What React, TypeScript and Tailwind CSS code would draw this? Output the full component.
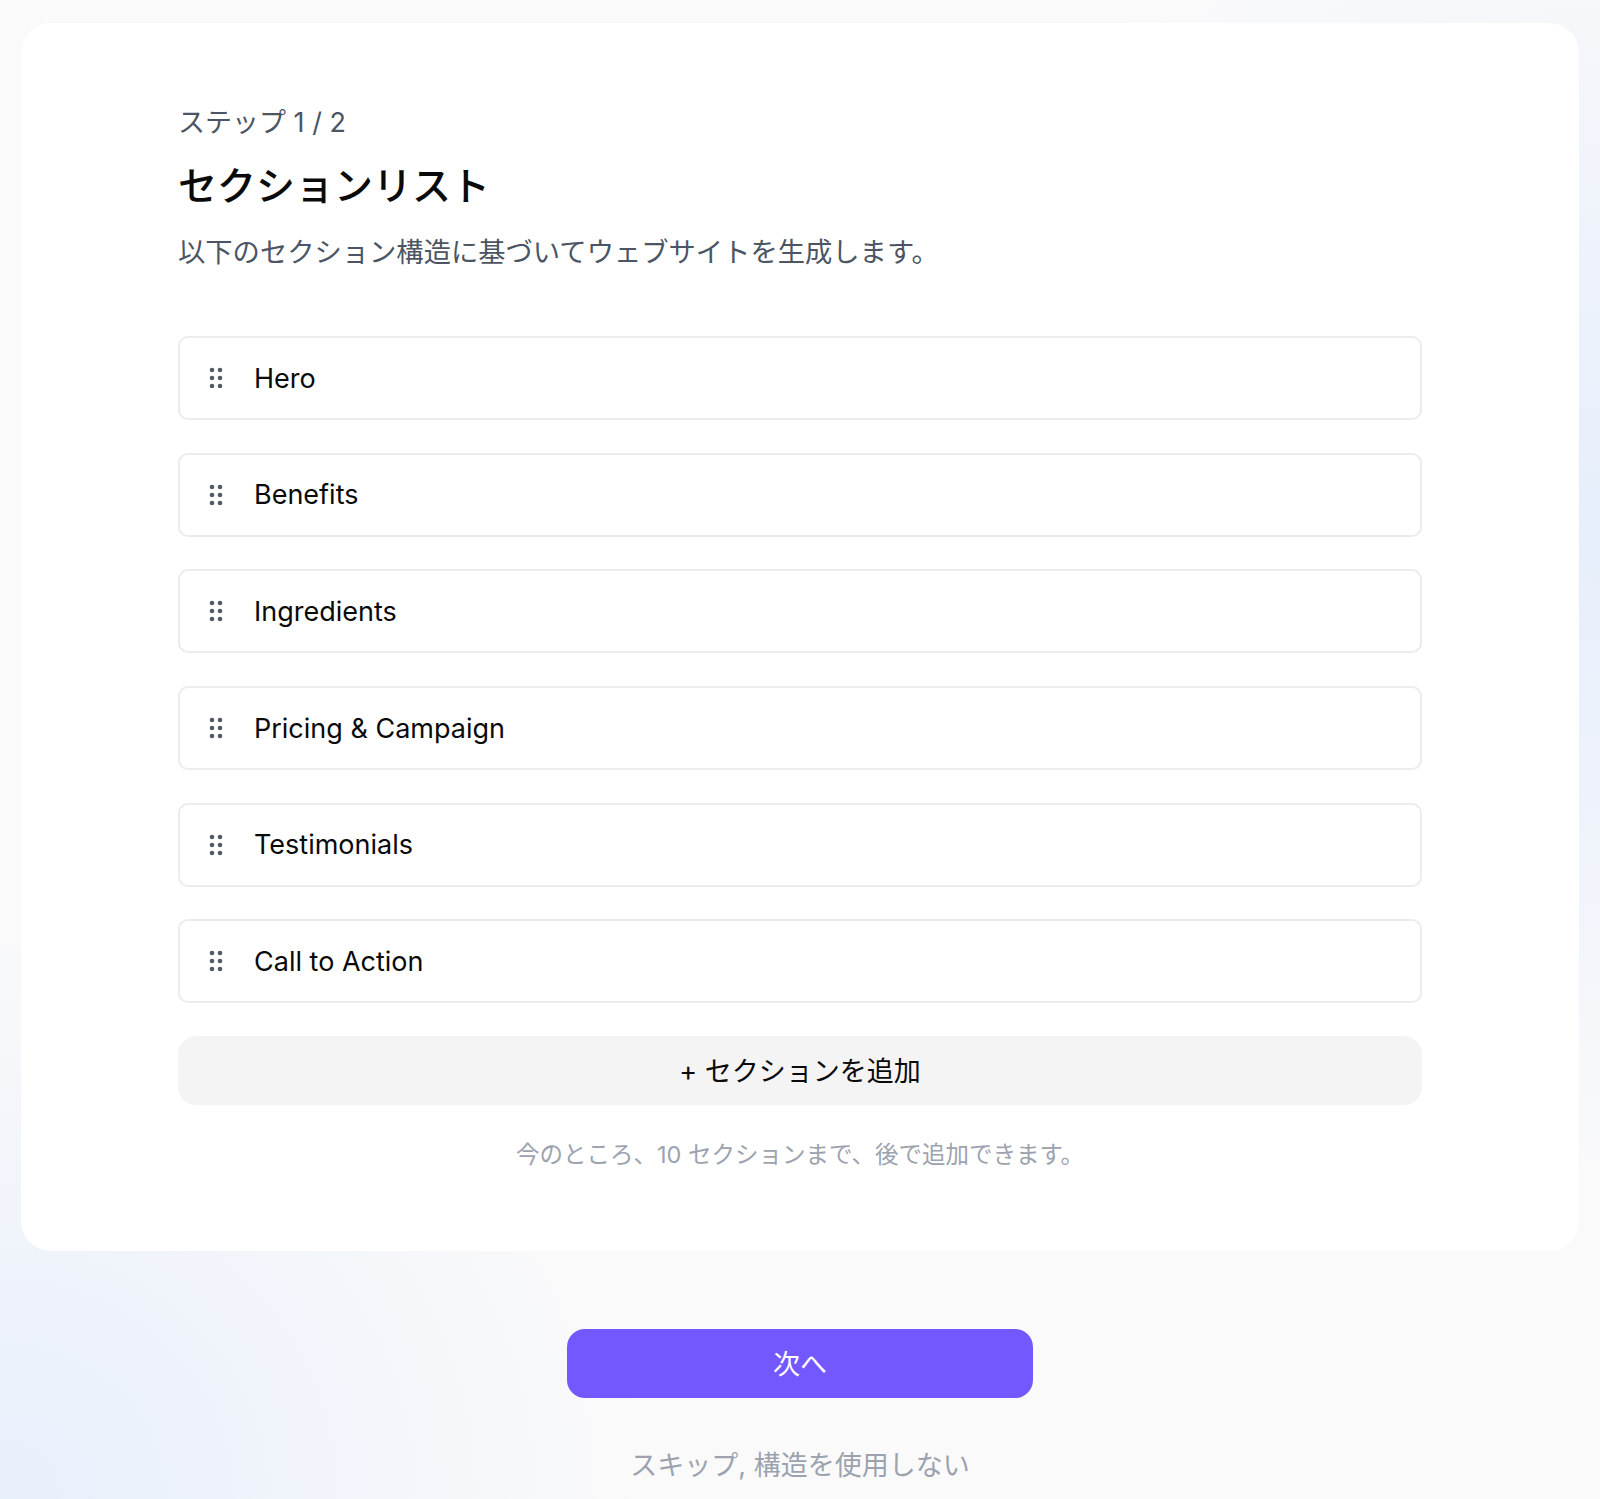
import React from 'react';

const sections = ['Hero', 'Benefits', 'Ingredients', 'Pricing & Campaign', 'Testimonials', 'Call to Action'];

const font = "font-['Inter','Noto_Sans_CJK_JP',sans-serif]";

function GripIcon() {
  return (
    <svg width="14" height="22" viewBox="0 0 14 22" className="text-[#525a68]" fill="currentColor">
      <circle cx="3" cy="3" r="2.3" />
      <circle cx="11" cy="3" r="2.3" />
      <circle cx="3" cy="11" r="2.3" />
      <circle cx="11" cy="11" r="2.3" />
      <circle cx="3" cy="19" r="2.3" />
      <circle cx="11" cy="19" r="2.3" />
    </svg>
  );
}

function SectionRow({ name }: { name: string }) {
  return (
    <div className="flex h-[84px] items-center rounded-[10px] border-2 border-[#ebecef] bg-white pl-[29px]">
      <GripIcon />
      <span className="ml-[31px] text-[27px] leading-none text-[#0a0a0a]">{name}</span>
    </div>
  );
}

export default function App() {
  return (
    <div
      className={`${font} min-h-[1499px] w-full px-[21px] pt-[23px] bg-[radial-gradient(ellipse_45%_45%_at_100%_35%,rgba(219,232,252,0.65),transparent),radial-gradient(ellipse_40%_40%_at_0%_100%,rgba(219,232,252,0.6),transparent),linear-gradient(#fafafa,#fafafa)]`}
    >
      <div className="rounded-[30px] bg-white px-[157px] pb-[80px] pt-[82px]">
        <p className="text-[27px] leading-[36px] text-[#4b5563]">ステップ 1 / 2</p>
        <h1 className="mt-[21px] text-[39px] font-medium leading-[48px] text-[#0a0a0a]">セクションリスト</h1>
        <p className="mt-[23px] text-[27.3px] leading-[40px] text-[#4b5563]">
          以下のセクション構造に基づいてウェブサイトを生成します。
        </p>

        <div className="mt-[63px] flex flex-col gap-[32.7px]">
          {sections.map((s) => (
            <SectionRow key={s} name={s} />
          ))}
          <button className="flex h-[69px] w-full items-center justify-center rounded-[18px] bg-[#f4f4f5] pt-[3px] text-[27px] text-[#0a0a0a]">
            + セクションを追加
          </button>
        </div>

        <p className="mt-[34px] text-center text-[23.5px] leading-[32px] text-[#9ca3af]">
          今のところ、10 セクションまで、後で追加できます。
        </p>
      </div>

      <div className="flex flex-col items-center pt-[78px]">
        <button className="flex h-[69px] w-[466px] items-center justify-center rounded-[18px] bg-[#7357ff] pt-[3px] text-[27px] text-white">
          次へ
        </button>
        <button className="mt-[50px] text-[27px] leading-[36px] text-[#9ca3af]">スキップ, 構造を使用しない</button>
      </div>
    </div>
  );
}
